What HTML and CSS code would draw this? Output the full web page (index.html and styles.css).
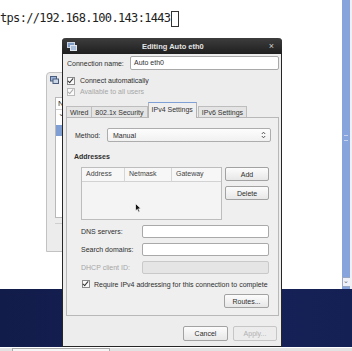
FILE: index.html
```html
<!DOCTYPE html>
<html lang="en">
<head>
  <meta charset="UTF-8" />
  <title>Editing Auto eth0</title>
  <link rel="stylesheet" href="styles.css">
</head>
<body>
  <div class="screen">
    <div class="top">
      <div class="term">
        <span class="url">tps://192.168.100.143:1443</span><span class="cursor"></span>
      </div>
      <div class="vscroll">
        <span class="grip"></span>
        <span class="arrow">&#8964;</span>
      </div>
      <div class="edge"></div>
    </div>
    <div class="desktop"></div>
    <div class="taskbar"><span class="task"></span></div>

    <!-- window behind the dialog -->
    <div class="bgwin">
      <svg class="wicon" width="9" height="8" viewBox="0 0 9 8">
        <rect x="0.5" y="0.5" width="6" height="4.5" fill="#9cb4d8" stroke="#4a5d7c" stroke-width="1"/>
        <rect x="3" y="3" width="5.5" height="4.5" fill="#c9d6e8" stroke="#4a5d7c" stroke-width="1"/>
      </svg>
      <div class="list">
        <div class="lhead">N</div>
        <div class="lrow">&#8964;</div>
        <div class="lrow sel"></div>
      </div>
      <div class="sep"></div>
    </div>

    <div class="dialog">
      <div class="titlebar">
        <svg class="ticon" width="10" height="9" viewBox="0 0 10 9">
          <rect x="0.5" y="0.5" width="7" height="5" fill="#7f9cc4" stroke="#c8d2e0" stroke-width="1"/>
          <rect x="3.5" y="3.5" width="6" height="5" fill="#a9bfdc" stroke="#e0e6ee" stroke-width="1"/>
        </svg>
        <span class="title">Editing Auto eth0</span>
        <span class="close">&times;</span>
      </div>
      <div class="body">
        <div class="conn">
          <label>Connection name:</label>
          <div class="entry">Auto eth0</div>
        </div>
        <div class="check"><span class="box on"></span>Connect automatically</div>
        <div class="check dim"><span class="box on"></span>Available to all users</div>

        <div class="tabs">
          <span class="tab">Wired</span>
          <span class="tab">802.1x Security</span>
          <span class="tab active">IPv4 Settings</span>
          <span class="tab">IPv6 Settings</span>
        </div>

        <div class="panel">
          <div class="method">
            <label>Method:</label>
            <div class="combo">
              <span>Manual</span>
              <svg width="5" height="8" viewBox="0 0 5 8">
                <path d="M0.8 3 L2.5 1.2 L4.2 3 M0.8 5 L2.5 6.8 L4.2 5" fill="none" stroke="#444" stroke-width="0.9"/>
              </svg>
            </div>
          </div>

          <div class="heading">Addresses</div>

          <div class="addr">
            <div class="table">
              <div class="thead">
                <span class="c1">Address</span>
                <span class="c2">Netmask</span>
                <span class="c3">Gateway</span>
              </div>
              <div class="tbody">
                <svg class="pointer" width="7" height="10" viewBox="0 0 7 10">
                  <path d="M0.5 0.5 L0.5 8 L2.3 6.3 L3.6 9.2 L4.8 8.6 L3.6 5.8 L6 5.8 Z" fill="#111" stroke="#fff" stroke-width="0.7"/>
                </svg>
              </div>
            </div>
            <div class="side">
              <button class="btn">Add</button>
              <button class="btn">Delete</button>
            </div>
          </div>

          <div class="field">
            <label>DNS servers:</label>
            <div class="entry"></div>
          </div>
          <div class="field">
            <label>Search domains:</label>
            <div class="entry"></div>
          </div>
          <div class="field dim">
            <label>DHCP client ID:</label>
            <div class="entry off"></div>
          </div>

          <div class="check req"><span class="box on"></span>Require IPv4 addressing for this connection to complete</div>

          <div class="routes"><button class="btn">Routes...</button></div>
        </div>

        <div class="actions">
          <button class="btn">Cancel</button>
          <button class="btn off">Apply...</button>
        </div>
      </div>
    </div>
  </div>
</body>
</html>
```

FILE: styles.css
```css
body { margin: 0; background: #fff; }
.screen { position: relative; width: 352px; height: 351px; overflow: hidden; font-family: "Liberation Sans", Arial, sans-serif; font-size: 7px; color: #2e2e2e; }

/* terminal / browser area */
.top { display: flex; height: 289px; }
.term { flex: 1; background: #fff; display: flex; align-items: flex-start; padding-top: 11px; }
.url { font-family: "DejaVu Sans Mono", monospace; font-size: 12px; line-height: 15px; letter-spacing: -0.67px; color: #222; }
.cursor { width: 6px; height: 14px; border: 1px solid #333; margin-left: 1px; }
.vscroll { width: 8px; background: #88a4dc; display: flex; flex-direction: column; align-items: center; }
.grip { width: 4px; height: 4px; margin-top: 135px; border-top: 1px solid #c6d3ee; border-bottom: 1px solid #c6d3ee; }
.arrow { margin-top: auto; margin-bottom: 2px; width: 7px; height: 8px; background: #eef1f7; border: 0.5px solid #9aa8c4; font-size: 7px; line-height: 5px; text-align: center; color: #667; }
.edge { width: 2px; background: #eef0f4; }
.desktop { height: 58px; background: linear-gradient(90deg, #121c4a, #17235a 60%, #142053); }
.taskbar { height: 4px; background: #e2e2e2; padding-left: 12px; }
.task { display: block; width: 98px; height: 3px; margin-top: 1px; background: #f5f5f5; border: 1px solid #a9a9a9; border-bottom: none; box-sizing: border-box; }

/* background window */
.bgwin { position: absolute; left: 46px; top: 72px; width: 60px; height: 180px; background: #ececec; border: 1px solid #c2c2c2; border-radius: 4px 0 0 0; box-sizing: border-box; padding: 3px 0 0 3px; }
.wicon { display: block; }
.list { margin: 13px 0 0 5px; height: 121px; background: #fff; border: 1px solid #b9b9b9; box-sizing: border-box; }
.lhead { height: 11px; line-height: 11px; padding-left: 2px; font-size: 8px; border-bottom: 1px solid #d0d0d0; }
.lrow { height: 12px; line-height: 8px; padding-left: 2px; font-size: 8px; color: #555; }
.lrow.sel { height: 11px; background: #7e9ed4; margin-top: 3px; }
.sep { margin: 5px 0 0 5px; border-top: 1px solid #cfcfcf; }

/* dialog */
.dialog { position: absolute; left: 62px; top: 38px; width: 220px; height: 309px; box-sizing: border-box; background: #ededed; border: 1px solid #262626; border-top: none; border-radius: 4px 4px 0 0; }
.titlebar { height: 16px; margin: 0 -1px; background: linear-gradient(#3d3d3d, #1f1f1f); border-radius: 4px 4px 0 0; display: flex; align-items: center; padding: 0 8px 0 5px; }
.ticon { display: block; }
.title { flex: 1; text-align: center; font-size: 7.5px; font-weight: bold; color: #e4e4e4; }
.close { color: #cfcfcf; font-size: 9px; }
.body { padding: 2px 1px 0 3px; }

.conn { display: flex; align-items: center; height: 14px; margin-right: 1px; }
.conn label { width: 64px; padding-left: 1px; box-sizing: border-box; }
.entry { flex: 1; height: 14px; box-sizing: border-box; background: #fff; border: 1px solid #a9a9a9; border-radius: 2px; padding-left: 3px; line-height: 12px; }
.entry.off { background: #e5e5e5; border-color: #c9c9c9; }

.check { display: flex; align-items: center; height: 11px; padding-left: 1px; }
.conn + .check { margin-top: 5px; }
.dim { color: #a6a6a6; }
.box { width: 6px; height: 6px; border: 1px solid #8a8a8a; background: #fafafa; margin-right: 5px; position: relative; }
.box.on::after { content: ""; position: absolute; left: 1px; top: -1px; width: 2px; height: 5px; border: solid #333; border-width: 0 1px 1px 0; transform: rotate(40deg); }
.dim .box { border-color: #bbb; }
.dim .box.on::after { border-color: #aaa; }

.tabs { display: flex; align-items: flex-end; height: 15px; margin-top: 5px; }
.tab { height: 11px; line-height: 11px; padding: 0 3px; border: 1px solid #bdbdbd; border-bottom: none; background: #e4e4e4; box-sizing: border-box; margin-right: -1px; color: #333; }
.tab.active { height: 16px; line-height: 13px; padding: 0 3px; background: #efefef; border-color: #b3b3b3; border-top: 1px solid #7fa0d6; margin: 0 1px -1px 1px; position: relative; }

.panel { height: 199px; margin-right: 1px; box-sizing: border-box; border: 1px solid #b8b8b8; background: #efefef; padding: 10px 7px 7px 8px; display: flex; flex-direction: column; }
.method { display: flex; align-items: center; height: 14px; }
.method label { width: 32px; }
.combo { flex: 1; height: 14px; box-sizing: border-box; border: 1px solid #adadad; border-radius: 2px; background: linear-gradient(#fdfdfd, #f1f1f1); display: flex; align-items: center; justify-content: space-between; padding: 0 4px 0 5px; }
.combo svg { display: block; }
.heading { font-weight: bold; height: 11px; line-height: 11px; margin-top: 9px; margin-left: -1px; }

.addr { display: flex; gap: 3px; margin: 5px 2px 0 6px; }
.table { width: 141px; height: 53px; box-sizing: border-box; border: 1px solid #bdbdbd; background: #f4f4f4; display: flex; flex-direction: column; }
.thead { display: flex; height: 13px; line-height: 12px; border-bottom: 1px solid #d2d2d2; background: #f7f7f7; }
.thead span { padding-left: 4px; border-right: 1px solid #d6d6d6; box-sizing: border-box; color: #444; }
.c1 { width: 43px; }
.c2 { width: 47px; }
.c3 { flex: 1; border-right: none !important; }
.tbody { flex: 1; position: relative; }
.pointer { position: absolute; left: 53px; top: 21px; }
.side { flex: 1; display: flex; flex-direction: column; gap: 5px; }

.btn { font-family: inherit; font-size: 7px; color: #2e2e2e; height: 14px; padding: 0; box-sizing: border-box; border: 1px solid #a2a2a2; border-radius: 2px; background: linear-gradient(#fcfcfc, #e7e7e7); }
.btn.off { color: #b0b0b0; border-color: #c6c6c6; background: #ececec; }

.field { display: flex; align-items: center; height: 13px; margin: 5px 2px 0 6px; }
.addr + .field { margin-top: 5px; }
.field label { width: 61px; }
.field .entry { height: 13px; }

.check.req { margin: 5px 0 0 7px; height: 10px; padding-left: 0; }
.req .box { margin-right: 4px; }
.routes { display: flex; justify-content: flex-end; margin: 5px 2px 0 0; }
.routes .btn { width: 45px; }

.actions { display: flex; justify-content: flex-end; gap: 5px; margin: 10px 3px 0 0; }
.actions .btn { width: 45px; height: 15px; }
.actions .btn.off { width: 44px; }
```
